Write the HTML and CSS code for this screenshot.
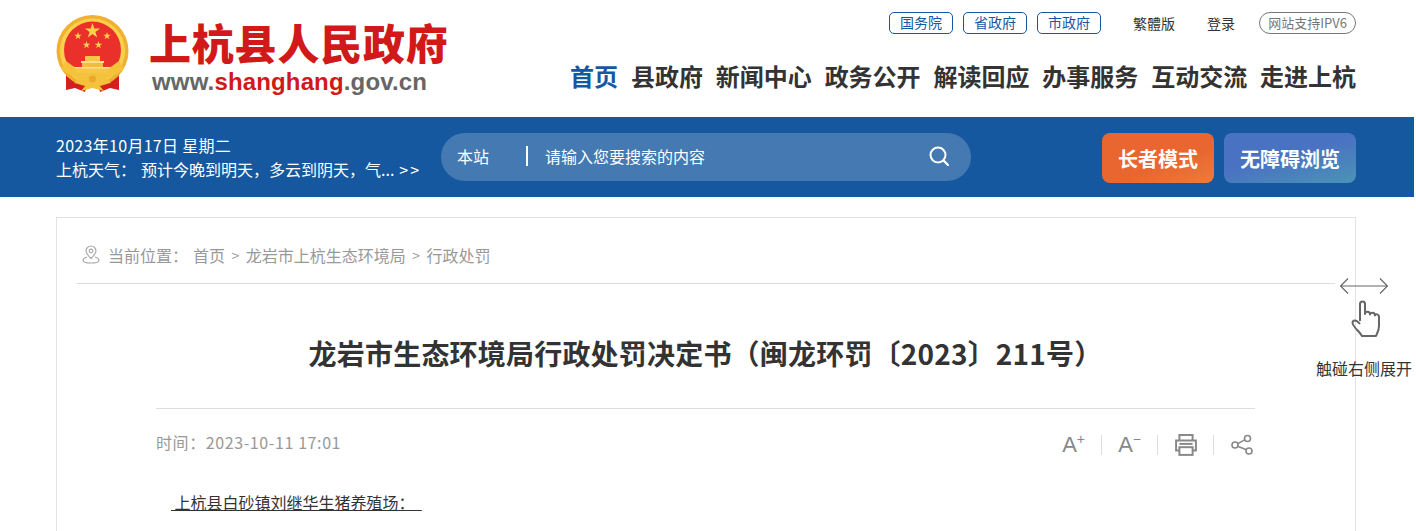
FILE: index.html
```html
<!DOCTYPE html>
<html lang="zh-CN">
<head>
  <meta charset="UTF-8" />
  <title>龙岩市生态环境局行政处罚决定书</title>
  <link rel="stylesheet" href="styles.css">
</head>
<body>
  <svg class="defs" width="0" height="0">
    <symbol id="star" viewBox="-1 -1 2 2">
      <polygon points="0,-1 .225,-.309 .951,-.309 .363,.118 .588,.809 0,.382 -.588,.809 -.363,.118 -.951,-.309 -.225,-.309" />
    </symbol>
  </svg>

  <header class="header">
    <div class="logo">
      <svg class="emblem" viewBox="0 0 74 78" width="74" height="78">
        <path d="M10 54 L10 75 L19 73 L29 77 L33 62 Z" fill="#d3201c" />
        <path d="M63 54 L63 75 L54 73 L44 77 L40 62 Z" fill="#d3201c" />
        <circle cx="36.500" cy="36" r="36" fill="#f0b030" />
        <circle cx="36.500" cy="36" r="32.500" fill="#fad04e" />
        <circle cx="36.500" cy="35" r="28.500" fill="#e9302a" />
        <path d="M10 46 Q36.500 68 63 46 L68 54 Q36.500 78 5 54 Z" fill="#f6c23c" />
        <rect x="26" y="48" width="21" height="9" fill="#f4bb3c" />
        <rect x="29" y="41" width="15" height="5" fill="#f6c648" />
        <rect x="25" y="46" width="23" height="2" fill="#fde08a" />
        <rect x="21" y="53" width="31" height="5" fill="#f6c648" />
        <rect x="19" y="52" width="35" height="1.500" fill="#fde08a" />
        <use href="#star" x="28.500" y="8" width="16" height="16" fill="#fbd24a" />
        <use href="#star" x="18" y="17" width="8" height="8" fill="#fbd24a" />
        <use href="#star" x="47" y="17" width="8" height="8" fill="#fbd24a" />
        <use href="#star" x="26.500" y="26" width="8" height="8" fill="#fbd24a" />
        <use href="#star" x="38.500" y="26" width="8" height="8" fill="#fbd24a" />
        <path d="M24 62 Q36.500 56 49 62 L55 68 L43 70 L48 76 L36.500 73 L25 76 L30 70 L18 68 Z" fill="#f5c23c" />
        <circle cx="36.500" cy="64" r="3.500" fill="#e9a92c" />
      </svg>
      <div class="logo-text">
        <div class="site-name">上杭县人民政府</div>
        <div class="site-url">www.<em>shanghang</em>.gov.cn</div>
      </div>
    </div>

    <div class="header-right">
      <div class="top-links">
        <a class="pill">国务院</a>
        <a class="pill">省政府</a>
        <a class="pill">市政府</a>
        <a class="top-link first">繁體版</a>
        <a class="top-link">登录</a>
        <a class="pill-gray">网站支持IPV6</a>
      </div>
      <nav class="nav">
        <a class="active">首页</a>
        <a>县政府</a>
        <a>新闻中心</a>
        <a>政务公开</a>
        <a>解读回应</a>
        <a>办事服务</a>
        <a>互动交流</a>
        <a>走进上杭</a>
      </nav>
    </div>
  </header>

  <div class="band">
    <div class="band-info">
      <p class="date">2023年10月17日 星期二</p>
      <p class="weather"><span class="weather-label">上杭天气：</span><span>预计今晚到明天，多云到阴天，气...</span><span class="more">&gt;&gt;</span></p>
    </div>
    <div class="search">
      <span class="scope">本站</span>
      <span class="placeholder">请输入您要搜索的内容</span>
      <svg class="search-icon" viewBox="0 0 20 20" width="20" height="20">
        <circle cx="9" cy="9" r="7.500" fill="none" stroke="#fff" stroke-width="2" />
        <path d="M14.500 14.500 L19 19" stroke="#fff" stroke-width="2.400" stroke-linecap="round" />
      </svg>
    </div>
    <div class="band-btns">
      <a class="btn btn-orange">长者模式</a>
      <a class="btn btn-blue">无障碍浏览</a>
    </div>
  </div>

  <main class="card">
    <div class="crumbs">
      <svg class="pin" viewBox="0 0 18 19" width="18" height="19">
        <path d="M9 13.500 C6 10.500 4 8.500 4 6 A5 5 0 0 1 14 6 C14 8.500 12 10.500 9 13.500 Z" fill="none" stroke="#aaa" stroke-width="1.200" />
        <circle cx="9" cy="6" r="1.800" fill="none" stroke="#aaa" stroke-width="1.200" />
        <path d="M5 12 C2 13 1 14 1 15.200 C1 17 5 18 9 18 C13 18 17 17 17 15.200 C17 14 16 13 13 12" fill="none" stroke="#aaa" stroke-width="1.200" />
      </svg>
      <span class="crumb-label">当前位置：</span>
      <a>首页</a><span class="sep">&gt;</span><a>龙岩市上杭生态环境局</a><span class="sep">&gt;</span><a>行政处罚</a>
    </div>

    <article class="article">
      <h1 class="article-title">龙岩市生态环境局行政处罚决定书（闽龙环罚〔2023〕211号）</h1>
      <div class="meta">
        <span class="time">时间：2023-10-11 17:01</span>
        <div class="tools">
          <span class="tool font-tool">A<sup>+</sup></span>
          <span class="tool font-tool">A<sup>−</sup></span>
          <span class="tool">
            <svg viewBox="1 1 20 20" width="22" height="22" fill="none" stroke="#888" stroke-width="1.800">
              <path d="M5 7 V2 H17 V7" />
              <path d="M5 16 H2 V7 H20 V16 H17" />
              <rect x="5" y="13" width="12" height="7" />
              <path d="M5 10 H17" />
            </svg>
          </span>
          <span class="tool">
            <svg viewBox="0 0 22 22" width="22" height="22" fill="none" stroke="#888" stroke-width="1.600">
              <circle cx="16.500" cy="4.500" r="3" />
              <circle cx="4" cy="11" r="3" />
              <circle cx="18" cy="17" r="3" />
              <path d="M6.700 9.600 L13.800 5.900 M6.700 12.300 L15.300 15.700" />
            </svg>
          </span>
        </div>
      </div>
      <p class="body-text"><u>&nbsp;上杭县白砂镇刘继华生猪养殖场：&nbsp;&nbsp;</u></p>
    </article>
  </main>

  <aside class="side-tip">
    <svg viewBox="0 0 48 16" width="48" height="16" fill="none" stroke="#666" stroke-width="1.200">
      <path d="M0.500 8 H47.500 M8 0.500 L0.500 8 L8 15.500 M40 0.500 L47.500 8 L40 15.500" />
    </svg>
    <svg class="hand" viewBox="0 0 30 38" width="30" height="38" fill="none" stroke="#666" stroke-width="2" stroke-linejoin="round">
      <path d="M9 21 V4 C9 0.500 14 0.500 14 4 V14 C14 11 19 11 19 14.500 C19 12 24 12 24 15.500 C24 13.500 28 14 28 17 V26 C28 31 26 33 25 36 H11 C9 32 2 27 1.500 23 C1.500 20 5 19 9 24" />
    </svg>
    <span>触碰右侧展开</span>
  </aside>
</body>
</html>
```

FILE: styles.css
```css
* {
  margin: 0;
  padding: 0;
  box-sizing: border-box;
}
html, body {
  height: 531px;
  overflow: hidden;
}
body {
  position: relative;
  width: 1414px;
  font-family: "Noto Sans CJK SC", "Noto Sans", sans-serif;
  font-size: 16px;
  color: #333;
  background: #fff;
}
.defs {
  position: absolute;
}
.header {
  height: 117px;
  padding: 12px 58px 0 56px;
  display: flex;
  justify-content: space-between;
}
.logo {
  display: flex;
  padding-top: 3px;
}
.emblem {
  margin-right: 20px;
}
.logo-text {
  padding-top: 2px;
}
.site-name {
  font-size: 42px;
  font-weight: 900;
  line-height: 50px;
  letter-spacing: 0.8px;
  margin-left: -1px;
  color: #d2191a;
}
.site-url {
  font-family: "Liberation Sans", sans-serif;
  font-size: 24px;
  font-weight: bold;
  line-height: 30px;
  letter-spacing: 0.15px;
  margin: 0 0 0 2px;
  color: #666;
}
.site-url em {
  font-style: normal;
  color: #d2191a;
}
.header-right {
  display: flex;
  flex-direction: column;
  align-items: flex-end;
}
.top-links {
  display: flex;
  align-items: center;
  height: 22px;
  font-size: 14px;
}
.pill {
  width: 64px;
  height: 22px;
  line-height: 19px;
  margin-right: 10px;
  text-align: center;
  color: #16589f;
  border: 1px solid #16589f;
  border-radius: 5px;
}
.top-link {
  margin-right: 31px;
  color: #333;
}
.top-link.first {
  margin-left: 22px;
  margin-right: 32px;
}
.top-link + .pill-gray {
  margin-left: -7px;
}
.pill-gray {
  width: 97px;
  height: 22px;
  line-height: 19px;
  font-size: 13px;
  text-align: center;
  color: #777;
  border: 1px solid #777;
  border-radius: 11px;
}
.nav {
  display: flex;
  gap: 12.85px;
  margin-top: 25px;
  font-size: 24px;
  font-weight: bold;
  line-height: 34px;
  color: #333;
}
.nav .active {
  color: #16589f;
}
.band {
  height: 80px;
  padding: 16px 58px 0 56px;
  display: flex;
  color: #fff;
  background: #16589f;
}
.band-info {
  width: 385px;
  font-size: 16px;
  line-height: 24px;
}
.date {
  letter-spacing: 0.3px;
}
.weather {
  display: flex;
  white-space: nowrap;
}
.weather-label {
  width: 85px;
}
.more {
  margin-left: 5px;
  letter-spacing: 2px;
}
.search {
  width: 530px;
  height: 48px;
  padding: 0 22px 2px 16px;
  display: flex;
  align-items: center;
  background: rgba(255,255,255,0.2);
  border-radius: 24px;
}
.scope {
  width: 71px;
  height: 20px;
  line-height: 20px;
  border-right: 2px solid #fff;
  margin-right: 17px;
}
.placeholder {
  flex: 1;
}
.band-btns {
  margin-left: auto;
  display: flex;
  gap: 10px;
}
.btn {
  height: 50px;
  line-height: 52px;
  text-align: center;
  font-size: 20px;
  font-weight: bold;
  border-radius: 8px;
}
.btn-orange {
  width: 112px;
  background: linear-gradient(160deg, #e96630 60%, #ec7c3c);
}
.btn-blue {
  width: 132px;
  background: linear-gradient(165deg, #4a72c2 45%, #4a94b6);
}
.card {
  height: 400px;
  margin: 20px 58px 0 56px;
  border: 1px solid #e3e3e3;
}
.crumbs {
  height: 66px;
  margin: 0 20px;
  padding: 8px 5px 0;
  display: flex;
  align-items: center;
  color: #999;
  border-bottom: 1px solid #ddd;
}
.pin {
  margin-right: 8px;
}
.crumb-label {
  width: 85px;
}
.sep {
  margin: 0 6.5px;
  font-size: 14px;
}
.article {
  margin: 0 100px 0 99px;
}
.article-title {
  height: 125px;
  line-height: 138px;
  font-size: 28px;
  font-weight: bold;
  letter-spacing: 0.2px;
  text-align: center;
  color: #333;
  border-bottom: 1px solid #ddd;
  white-space: nowrap;
}
.meta {
  display: flex;
  justify-content: space-between;
  align-items: center;
  height: 72px;
}
.time {
  margin-bottom: 6px;
  letter-spacing: 0.6px;
  color: #999;
}
.tools {
  display: flex;
  align-items: center;
  margin-right: 2px;
}
.tool {
  width: 56px;
  height: 22px;
  display: flex;
  justify-content: flex-end;
  align-items: center;
  position: relative;
  color: #888;
}
.tool + .tool::before {
  content: "";
  position: absolute;
  left: 16px;
  top: 1px;
  height: 20px;
  width: 1px;
  background: #ddd;
}
.tools .tool:first-child {
  width: 23px;
}
.font-tool {
  font-family: "Liberation Sans", sans-serif;
  font-size: 22px;
  line-height: 22px;
}
.font-tool sup {
  font-size: 14px;
  line-height: 10px;
  align-self: flex-start;
}
.body-text {
  margin: 7px 0 0 15px;
  color: #333;
  line-height: 28px;
}
.side-tip {
  position: absolute;
  left: 1315px;
  top: 278px;
  width: 98px;
  display: flex;
  flex-direction: column;
  align-items: center;
  color: #333;
  font-size: 16px;
  line-height: 24px;
}
.side-tip .hand {
  margin: 6px 0 0 3px;
}
.side-tip span {
  margin-top: 18px;
  white-space: nowrap;
}
```
